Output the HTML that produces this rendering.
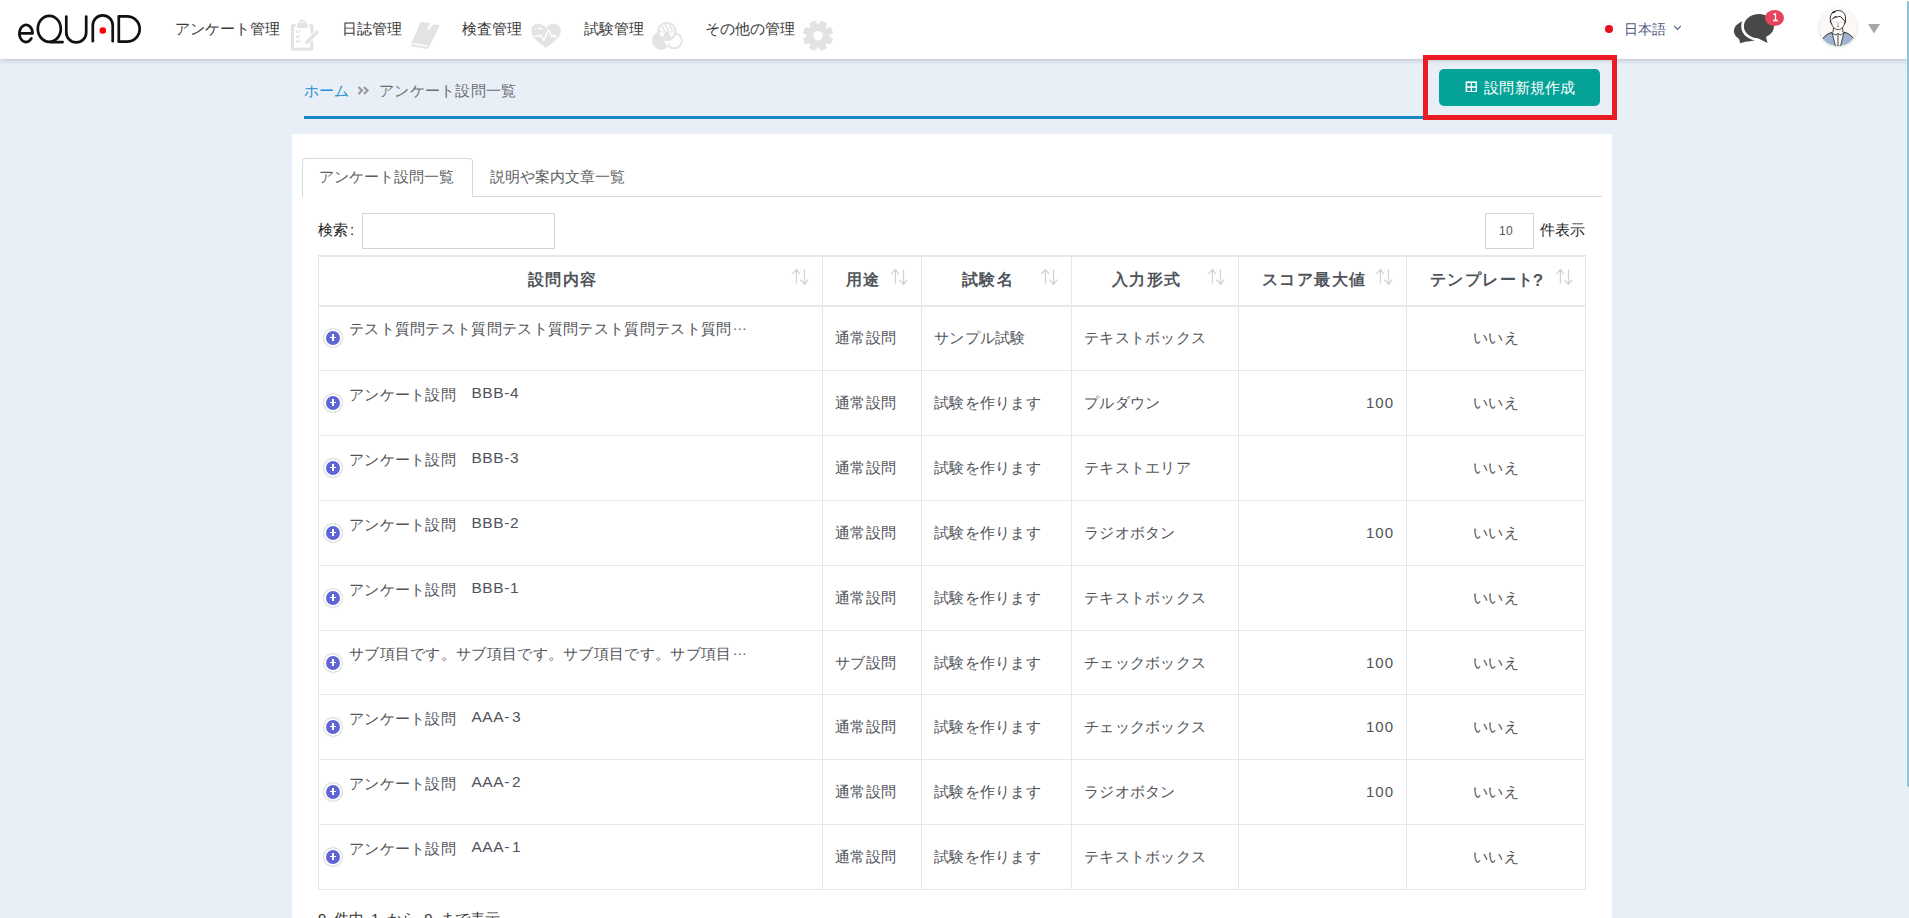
<!DOCTYPE html>
<html lang="ja"><head><meta charset="utf-8">
<style>
*{box-sizing:border-box;margin:0;padding:0}
html,body{width:1909px;height:918px;overflow:hidden}
body{background:#e8eff6;font-family:"Liberation Sans",sans-serif;position:relative;color:#555}
.a{position:absolute;white-space:nowrap}
#hdr{left:0;top:0;width:1909px;height:59px;background:#fff;box-shadow:0 1px 5px rgba(60,80,100,.28)}
.nav{font-size:15px;line-height:15px;color:#3a3a3a;top:21px}
.ico{fill:#e3e3e3}
#card{left:292px;top:134px;width:1320px;height:800px;background:#fff}
.th{font-size:15.5px;line-height:15px;font-weight:bold;color:#50555b;top:272px;letter-spacing:1.45px}
.td{font-size:14.5px;line-height:15px;color:#50545a;letter-spacing:.3px;margin-top:1px}
.vl{position:absolute;width:1px;background:#e4e8ec}
.hl{position:absolute;height:1px;background:#e4e8ec;left:318px;width:1268px}
.sort{position:absolute;top:269px;width:17px;height:17px}
.plus{position:absolute;width:18px;height:18px;border-radius:50%;background:#fff;box-shadow:0 0 2px rgba(0,0,0,.45)}
.plus:after{content:"";position:absolute;left:2px;top:2px;width:14px;height:14px;border-radius:50%;background:#5f66d4}
.plus i{position:absolute;z-index:2;background:#fff}
.lat{font-size:15.5px;letter-spacing:.6px;position:relative;top:-2px}
.sp{display:inline-block;width:2px}
.el{position:relative;top:-4px;letter-spacing:1px;margin-left:1px}
.num{font-size:15px;letter-spacing:1px;margin-top:0}
.q{font-size:17px;letter-spacing:0;margin-left:-2px;position:relative;top:1px}
</style></head><body>

<!-- header -->
<div class="a" id="hdr"></div>
<svg class="a" style="left:0;top:0" width="160" height="59" viewBox="0 0 160 59">
 <g fill="none" stroke="#111" stroke-width="2.7" stroke-linecap="round" stroke-linejoin="round">
  <path d="M19.4,33.4 H32.6 A6.6,8.55 0 1 0 31.4,38.4"/>
  <ellipse cx="49.3" cy="28.8" rx="11.5" ry="13"/>
  <path d="M50.5,42.1 H62.6"/>
  <path d="M66.3,16.6 V32.5 A9.95,9.95 0 0 0 86.2,32.5 V16.6"/>
  <path d="M92.8,41.2 V25.3 A9.95,9.95 0 0 1 112.7,25.3 V41.2"/>
  <path d="M118.8,16.3 H127 A12.7,12.7 0 0 1 127,41.7 H118.8 Z"/>
 </g>
 <circle cx="102.8" cy="30.5" r="3.3" fill="#f00"/>
</svg>

<div class="a nav" style="left:175px">アンケート管理</div>
<div class="a nav" style="left:342px">日誌管理</div>
<div class="a nav" style="left:462px">検査管理</div>
<div class="a nav" style="left:584px">試験管理</div>
<div class="a nav" style="left:705px">その他の管理</div>

<!-- nav icons -->
<svg class="a" style="left:285px;top:15px" width="40" height="40" viewBox="0 0 40 40">
 <g fill="none" stroke="#e3e3e3" stroke-width="3" stroke-linecap="round" stroke-linejoin="round">
  <path d="M9.5,10.5 H7.5 V34.3 H26.8 V27"/>
  <path d="M25.5,10.5 H27 V17"/>
  <path d="M11.5,16.5 l1.2,1.2 l2.2,-2" stroke-width="1.4"/>
  <path d="M11.5,21.3 l1.2,1.2 l2.2,-2" stroke-width="1.4"/>
  <path d="M11.5,26.1 l1.2,1.2 l2.2,-2" stroke-width="1.4"/>
  <path d="M22,27.3 L29.2,20.1" stroke-width="3.6"/>
  <path d="M31,18.3 L32,17.3" stroke-width="3.6"/>
 </g>
 <path class="ico" d="M12,9 Q12,8 13,8 H21.7 Q22.7,8 22.7,9 V12 Q22.7,13 21.7,13 H13 Q12,13 12,12 Z"/>
 <circle cx="17.2" cy="7.6" r="2.3" fill="none" stroke="#e3e3e3" stroke-width="1.8"/>
</svg>
<svg class="a" style="left:405px;top:15px" width="40" height="40" viewBox="0 0 40 40">
 <path class="ico" d="M15.5,7.5 Q16.2,7 17,7 L25.5,8 L21.8,14.8 L24.5,14.2 L27.8,10 L31.3,9.5 Q35,9.8 34.2,11.5 L23,34 L7.5,31.5 Q5.2,31 6.2,28.7 Z"/>
 <path d="M6.5,28.7 L22.5,31" stroke="#fff" stroke-width="1.3"/>
</svg>
<svg class="a" style="left:526px;top:15px" width="40" height="40" viewBox="0 0 40 40">
 <path class="ico" d="M20,32.7 C13,27.5 5.2,22.5 5.2,15.7 C5.2,11.5 8.3,8.7 12.3,8.7 C15.5,8.7 18.3,10.5 20,13 C21.7,10.5 24.5,8.7 27.7,8.7 C31.7,8.7 34.9,11.5 34.9,15.7 C34.9,22.5 27,27.5 20,32.7 Z"/>
 <path d="M8,21.3 H12.5 L14.8,20 L17.8,25.5 L22.5,14.5 L26,22 L28,20 L30.8,23" fill="none" stroke="#fff" stroke-width="1.5" stroke-linejoin="round"/>
 <path d="M8.2,13.5 H9.3 M11.7,13.5 H16.5" stroke="#fff" stroke-width="1.5"/>
</svg>
<svg class="a" style="left:646px;top:15px" width="40" height="40" viewBox="0 0 40 40">
 <defs><clipPath id="vt"><path d="M12,16.4 A8.8,8.8 0 0 1 29.6,16.4 Z"/></clipPath></defs>
 <circle cx="20.8" cy="16.5" r="8.8" fill="none" stroke="#e3e3e3" stroke-width="1.8"/>
 <g clip-path="url(#vt)" stroke="#e3e3e3" stroke-width="1.4"><path d="M10,9 L14.5,16.5 M13.5,7 L19,16.5 M17.5,6 L23,16.5 M21.5,6 L27,16.5 M25.5,6.5 L31,16"/></g>
 <path d="M11.8,16.5 A9,9 0 0 0 29.8,16.5 Z" fill="#e3e3e3"/>
 <circle cx="15.2" cy="25.5" r="9.2" fill="#e3e3e3"/>
 <circle cx="28.2" cy="25.7" r="7.7" fill="none" stroke="#e3e3e3" stroke-width="1.8"/>
 <path d="M13,17.4 H19.2 L16.1,22.7 Z M22.5,17.4 H28.8 L25.6,22.7 Z M17.9,25.9 H24.4 L21.2,31.4 Z" fill="#fff"/>
</svg>
<svg class="a" style="left:798px;top:15px" width="40" height="40" viewBox="0 0 40 40">
 <g transform="translate(20,20.7)">
  <path class="ico" d="M10.55,1.02 L14.25,3.16 L12.31,7.84 L8.18,6.74 L6.74,8.18 L7.84,12.31 L3.16,14.25 L1.02,10.55 L-1.02,10.55 L-3.16,14.25 L-7.84,12.31 L-6.74,8.18 L-8.18,6.74 L-12.31,7.84 L-14.25,3.16 L-10.55,1.02 L-10.55,-1.02 L-14.25,-3.16 L-12.31,-7.84 L-8.18,-6.74 L-6.74,-8.18 L-7.84,-12.31 L-3.16,-14.25 L-1.02,-10.55 L1.02,-10.55 L3.16,-14.25 L7.84,-12.31 L6.74,-8.18 L8.18,-6.74 L12.31,-7.84 L14.25,-3.16 L10.55,-1.02 Z" stroke="#e3e3e3" stroke-width="1.6" stroke-linejoin="round"/>
  <circle r="4.8" fill="#fff"/>
 </g>
</svg>

<!-- right header -->
<div class="a" style="left:1603.5px;top:24px;width:11px;height:9.5px;background:#fff;box-shadow:0 0 1px rgba(0,0,0,.22)"></div>
<div class="a" style="left:1605.1px;top:25.1px;width:7.6px;height:7.6px;border-radius:50%;background:#e8101c"></div>
<div class="a" style="left:1624px;top:22px;font-size:14px;line-height:14px;color:#4b5a80">日本語</div>
<svg class="a" style="left:1673px;top:25px" width="9" height="6" viewBox="0 0 9 6"><path d="M1.2,1 L4.5,4.4 L7.8,1" fill="none" stroke="#5a6688" stroke-width="1.1"/></svg>

<svg class="a" style="left:1728px;top:5px" width="62" height="45" viewBox="0 0 62 45">
 <ellipse cx="20.5" cy="26" rx="14.6" ry="10.4" fill="#484848"/>
 <path d="M10.5,32 L12.3,38.2 L22.8,35.3 L16,33 Z" fill="#484848"/>
 <g stroke="#fff" stroke-width="5.4" fill="#fff" stroke-linejoin="round"><ellipse cx="30.9" cy="21.2" rx="15" ry="12.1"/><path d="M29.4,32 L39.5,38 L37.7,31 Z"/></g>
 <ellipse cx="30.9" cy="21.2" rx="15" ry="12.1" fill="#484848"/>
 <path d="M28.4,32.5 L39.5,38 L37.7,31 Z" fill="#484848"/>
 <ellipse cx="46.5" cy="13" rx="9.5" ry="8.1" fill="#e8435c"/>
 <path d="M47.5,8.3 V15.4 M45.3,9.8 L47.5,8.3 M45.2,15.5 H49.9" fill="none" stroke="#fff" stroke-width="1.3"/>
</svg>

<div class="a" style="left:1819px;top:8px;width:38px;height:38px;border-radius:50%;background:#fbf8f6;box-shadow:0 1px 3px rgba(0,0,0,.16);overflow:hidden">
 <svg width="38" height="38" viewBox="0 0 38 38">
  <path d="M3.6,31.2 C5.5,27.8 9,25.3 13,24.5 L16.5,38 H21.5 L25,24.2 C29,25 32.5,27.5 34.2,30.2 L36,38 L2,38 Z" fill="#9fb2cf"/>
  <path d="M3.6,31.2 C5.5,27.8 9,25.3 13,24.5 M34.2,30.2 C32.5,27.5 29,25 25,24.2" fill="none" stroke="#1a1a1a" stroke-width=".9"/>
  <path d="M13,24.5 L16.5,38 H21.5 L25,24.2 L22,27.2 L19,25.5 L16,27.2 Z" fill="#fff" stroke="#1a1a1a" stroke-width=".8" stroke-linejoin="round"/>
  <path d="M19,25.5 V38" stroke="#777" stroke-width="1.4"/>
  <path d="M14.5,19.5 L14,24 M23.5,19.5 L24,24" stroke="#1a1a1a" stroke-width=".8"/>
  <path d="M12.3,12.5 C12.3,18 15,21.5 19,21.5 C23,21.5 25.8,18 25.8,12.5" fill="#fff" stroke="#1a1a1a" stroke-width=".8"/>
  <path d="M11.8,15 C10.5,9.5 11.5,4.5 16,3.2 C18.5,2 22.5,2.5 24.5,4.5 C26.5,6.5 27,10 26.2,14" fill="#fff" stroke="#1a1a1a" stroke-width=".9"/>
  <path d="M13,11.5 C14,9.5 16.5,8.5 18.5,9 C20,7.8 22,8.5 23,10 C24,11.5 25,12.5 26.2,13" fill="none" stroke="#1a1a1a" stroke-width=".9"/>
  <path d="M14.5,10.2 C15.5,9 17,8.6 18,8.8" fill="none" stroke="#555" stroke-width="1.3"/>
  <path d="M13.2,4.8 C14.5,4 15.5,3.8 16.5,3.6" fill="none" stroke="#1a1a1a" stroke-width="1.4"/>
  <path d="M14,14.2 H24" stroke="#e2c6c6" stroke-width=".8"/><path d="M18.4,16 H19.8 M18,18.3 H20.2" stroke="#333" stroke-width=".7"/><path d="M12.4,12.8 C11.3,13 11.3,15.5 12.8,16 M25.7,12.8 C26.8,13 26.8,15.5 25.3,16" fill="none" stroke="#1a1a1a" stroke-width=".8"/>
 </svg>
</div>
<svg class="a" style="left:1867px;top:23px" width="14" height="11" viewBox="0 0 14 11"><path d="M1,1 H13 L7,10.5 Z" fill="#a8a8a8"/></svg>

<!-- scrollbar thumb -->
<div class="a" style="left:1907px;top:1px;width:2px;height:786px;border-radius:1px;background:#93c1da"></div>

<!-- breadcrumb -->
<div class="a" style="left:304px;top:83px;font-size:15px;line-height:15px;color:#2b8fd0">ホーム</div>
<svg class="a" style="left:357px;top:86px" width="13" height="9" viewBox="0 0 13 9"><path d="M1.5,1 L5,4.5 L1.5,8 M7,1 L10.5,4.5 L7,8" fill="none" stroke="#999" stroke-width="2.2"/></svg>
<div class="a" style="left:379px;top:83px;font-size:15px;line-height:15px;color:#6a6e73;letter-spacing:.3px">アンケート設問一覧</div>
<div class="a" style="left:304px;top:116px;width:1300px;height:3px;background:#1a85c9"></div>

<!-- button + red box -->
<div class="a" style="left:1439px;top:69px;width:161px;height:37px;border-radius:5px;background:#05a297"></div>
<svg class="a" style="left:1465px;top:81px" width="12" height="11" viewBox="0 0 12 11"><rect x="1.4" y="1.2" width="10" height="9.6" fill="none" stroke="#fff" stroke-width="1.6"/><path d="M6.4,1.5 V10.5 M1.5,6 H11.3" stroke="#fff" stroke-width="1.3"/></svg>
<div class="a" style="left:1484px;top:80.5px;font-size:14.5px;line-height:15px;color:#fff;letter-spacing:.25px">設問新規作成</div>
<div class="a" style="left:1423px;top:55px;width:194px;height:65px;border:5px solid #ec1c24"></div>

<!-- card -->
<div class="a" id="card"></div>
<!-- tabs -->
<div class="a" style="left:302px;top:196px;width:1300px;height:1px;background:#d5dae1"></div>
<div class="a" style="left:302px;top:158px;width:171px;height:39px;border:1px solid #d5dae1;border-bottom:0;border-radius:4px 4px 0 0;background:#fff"></div>
<div class="a" style="left:319px;top:169px;font-size:15px;line-height:15px;color:#5b5f64">アンケート設問一覧</div>
<div class="a" style="left:490px;top:169px;font-size:15px;line-height:15px;color:#5b5f64">説明や案内文章一覧</div>

<!-- search -->
<div class="a" style="left:318px;top:222px;font-size:15px;line-height:15px;color:#222">検索<span style="margin-left:2px">:</span></div>
<div class="a" style="left:362px;top:213px;width:193px;height:36px;border:1px solid #cfd4da"></div>
<div class="a" style="left:1485px;top:213px;width:49px;height:36px;border:1px solid #cfd4da"></div>
<div class="a" style="left:1499px;top:225px;font-size:12px;line-height:12px;color:#555;letter-spacing:.4px">10</div>
<div class="a" style="left:1540px;top:222px;font-size:15px;line-height:15px;color:#222">件表示</div>

<!-- table -->
<!-- TABLE START -->
<!-- table lines -->
<div class="a" style="left:318px;top:255px;width:1268px;height:2px;background:#e4e8ec"></div>
<div class="a" style="left:318px;top:305px;width:1268px;height:2px;background:#e4e8ec"></div>
<div class="hl" style="top:370px"></div>
<div class="hl" style="top:435px"></div>
<div class="hl" style="top:500px"></div>
<div class="hl" style="top:565px"></div>
<div class="hl" style="top:630px"></div>
<div class="hl" style="top:694px"></div>
<div class="hl" style="top:759px"></div>
<div class="hl" style="top:824px"></div>
<div class="hl" style="top:889px"></div>
<div class="vl" style="left:318px;top:255px;height:635px"></div>
<div class="vl" style="left:822px;top:255px;height:635px"></div>
<div class="vl" style="left:921px;top:255px;height:635px"></div>
<div class="vl" style="left:1071px;top:255px;height:635px"></div>
<div class="vl" style="left:1238px;top:255px;height:635px"></div>
<div class="vl" style="left:1406px;top:255px;height:635px"></div>
<div class="vl" style="left:1585px;top:255px;height:635px"></div>
<div class="a th" style="left:528px">設問内容</div>
<div class="a th" style="left:846px">用途</div>
<div class="a th" style="left:962px">試験名</div>
<div class="a th" style="left:1112px">入力形式</div>
<div class="a th" style="left:1262px">スコア最大値</div>
<div class="a th" style="left:1430px">テンプレート<span class=q>?</span></div>
<svg class="a" style="left:786px;top:262px" width="30" height="30" viewBox="0 0 30 30"><path d="M10.4,7.5 V21.6 M6.2,12.1 L10.4,7.5 L14,12.1 M18.5,7.4 V22.5 M14.4,17.6 L18.5,22.5 L22.2,17.6" fill="none" stroke="#d0d3d8" stroke-width="1.3"/></svg>
<svg class="a" style="left:885px;top:262px" width="30" height="30" viewBox="0 0 30 30"><path d="M10.4,7.5 V21.6 M6.2,12.1 L10.4,7.5 L14,12.1 M18.5,7.4 V22.5 M14.4,17.6 L18.5,22.5 L22.2,17.6" fill="none" stroke="#d0d3d8" stroke-width="1.3"/></svg>
<svg class="a" style="left:1035px;top:262px" width="30" height="30" viewBox="0 0 30 30"><path d="M10.4,7.5 V21.6 M6.2,12.1 L10.4,7.5 L14,12.1 M18.5,7.4 V22.5 M14.4,17.6 L18.5,22.5 L22.2,17.6" fill="none" stroke="#d0d3d8" stroke-width="1.3"/></svg>
<svg class="a" style="left:1202px;top:262px" width="30" height="30" viewBox="0 0 30 30"><path d="M10.4,7.5 V21.6 M6.2,12.1 L10.4,7.5 L14,12.1 M18.5,7.4 V22.5 M14.4,17.6 L18.5,22.5 L22.2,17.6" fill="none" stroke="#d0d3d8" stroke-width="1.3"/></svg>
<svg class="a" style="left:1370px;top:262px" width="30" height="30" viewBox="0 0 30 30"><path d="M10.4,7.5 V21.6 M6.2,12.1 L10.4,7.5 L14,12.1 M18.5,7.4 V22.5 M14.4,17.6 L18.5,22.5 L22.2,17.6" fill="none" stroke="#d0d3d8" stroke-width="1.3"/></svg>
<svg class="a" style="left:1550px;top:262px" width="30" height="30" viewBox="0 0 30 30"><path d="M10.4,7.5 V21.6 M6.2,12.1 L10.4,7.5 L14,12.1 M18.5,7.4 V22.5 M14.4,17.6 L18.5,22.5 L22.2,17.6" fill="none" stroke="#d0d3d8" stroke-width="1.3"/></svg>
<div class="plus" style="left:324px;top:328.7px"><i style="left:5.6px;top:8.4px;width:6.8px;height:1.2px"></i><i style="left:8.4px;top:5.6px;width:1.2px;height:6.8px"></i></div>
<div class="a td" style="left:349px;top:321.3px">テスト質問テスト質問テスト質問テスト質問テスト質問<span class=el>…</span></div>
<div class="a td" style="left:835px;top:330.0px">通常設問</div>
<div class="a td" style="left:934px;top:330.0px">サンプル試験</div>
<div class="a td" style="left:1084px;top:330.0px">テキストボックス</div>
<div class="a td" style="left:1473px;top:330.0px">いいえ</div>
<div class="plus" style="left:324px;top:393.7px"><i style="left:5.6px;top:8.4px;width:6.8px;height:1.2px"></i><i style="left:8.4px;top:5.6px;width:1.2px;height:6.8px"></i></div>
<div class="a td" style="left:349px;top:386.3px">アンケート設問　<span class=lat>BBB-4</span></div>
<div class="a td" style="left:835px;top:395.0px">通常設問</div>
<div class="a td" style="left:934px;top:395.0px">試験を作ります</div>
<div class="a td" style="left:1084px;top:395.0px">プルダウン</div>
<div class="a td num" style="right:515px;top:395.0px">100</div>
<div class="a td" style="left:1473px;top:395.0px">いいえ</div>
<div class="plus" style="left:324px;top:458.7px"><i style="left:5.6px;top:8.4px;width:6.8px;height:1.2px"></i><i style="left:8.4px;top:5.6px;width:1.2px;height:6.8px"></i></div>
<div class="a td" style="left:349px;top:451.3px">アンケート設問　<span class=lat>BBB-3</span></div>
<div class="a td" style="left:835px;top:460.0px">通常設問</div>
<div class="a td" style="left:934px;top:460.0px">試験を作ります</div>
<div class="a td" style="left:1084px;top:460.0px">テキストエリア</div>
<div class="a td" style="left:1473px;top:460.0px">いいえ</div>
<div class="plus" style="left:324px;top:523.7px"><i style="left:5.6px;top:8.4px;width:6.8px;height:1.2px"></i><i style="left:8.4px;top:5.6px;width:1.2px;height:6.8px"></i></div>
<div class="a td" style="left:349px;top:516.3px">アンケート設問　<span class=lat>BBB-2</span></div>
<div class="a td" style="left:835px;top:525.0px">通常設問</div>
<div class="a td" style="left:934px;top:525.0px">試験を作ります</div>
<div class="a td" style="left:1084px;top:525.0px">ラジオボタン</div>
<div class="a td num" style="right:515px;top:525.0px">100</div>
<div class="a td" style="left:1473px;top:525.0px">いいえ</div>
<div class="plus" style="left:324px;top:588.7px"><i style="left:5.6px;top:8.4px;width:6.8px;height:1.2px"></i><i style="left:8.4px;top:5.6px;width:1.2px;height:6.8px"></i></div>
<div class="a td" style="left:349px;top:581.3px">アンケート設問　<span class=lat>BBB-1</span></div>
<div class="a td" style="left:835px;top:590.0px">通常設問</div>
<div class="a td" style="left:934px;top:590.0px">試験を作ります</div>
<div class="a td" style="left:1084px;top:590.0px">テキストボックス</div>
<div class="a td" style="left:1473px;top:590.0px">いいえ</div>
<div class="plus" style="left:324px;top:653.7px"><i style="left:5.6px;top:8.4px;width:6.8px;height:1.2px"></i><i style="left:8.4px;top:5.6px;width:1.2px;height:6.8px"></i></div>
<div class="a td" style="left:349px;top:646.3px">サブ項目です。サブ項目です。サブ項目です。サブ項目<span class=el>…</span></div>
<div class="a td" style="left:835px;top:654.5px">サブ設問</div>
<div class="a td" style="left:934px;top:654.5px">試験を作ります</div>
<div class="a td" style="left:1084px;top:654.5px">チェックボックス</div>
<div class="a td num" style="right:515px;top:654.5px">100</div>
<div class="a td" style="left:1473px;top:654.5px">いいえ</div>
<div class="plus" style="left:324px;top:717.7px"><i style="left:5.6px;top:8.4px;width:6.8px;height:1.2px"></i><i style="left:8.4px;top:5.6px;width:1.2px;height:6.8px"></i></div>
<div class="a td" style="left:349px;top:710.3px">アンケート設問　<span class=lat>AAA-<i class=sp></i>3</span></div>
<div class="a td" style="left:835px;top:719.0px">通常設問</div>
<div class="a td" style="left:934px;top:719.0px">試験を作ります</div>
<div class="a td" style="left:1084px;top:719.0px">チェックボックス</div>
<div class="a td num" style="right:515px;top:719.0px">100</div>
<div class="a td" style="left:1473px;top:719.0px">いいえ</div>
<div class="plus" style="left:324px;top:782.7px"><i style="left:5.6px;top:8.4px;width:6.8px;height:1.2px"></i><i style="left:8.4px;top:5.6px;width:1.2px;height:6.8px"></i></div>
<div class="a td" style="left:349px;top:775.3px">アンケート設問　<span class=lat>AAA-<i class=sp></i>2</span></div>
<div class="a td" style="left:835px;top:784.0px">通常設問</div>
<div class="a td" style="left:934px;top:784.0px">試験を作ります</div>
<div class="a td" style="left:1084px;top:784.0px">ラジオボタン</div>
<div class="a td num" style="right:515px;top:784.0px">100</div>
<div class="a td" style="left:1473px;top:784.0px">いいえ</div>
<div class="plus" style="left:324px;top:847.7px"><i style="left:5.6px;top:8.4px;width:6.8px;height:1.2px"></i><i style="left:8.4px;top:5.6px;width:1.2px;height:6.8px"></i></div>
<div class="a td" style="left:349px;top:840.3px">アンケート設問　<span class=lat>AAA-<i class=sp></i>1</span></div>
<div class="a td" style="left:835px;top:849.0px">通常設問</div>
<div class="a td" style="left:934px;top:849.0px">試験を作ります</div>
<div class="a td" style="left:1084px;top:849.0px">テキストボックス</div>
<div class="a td" style="left:1473px;top:849.0px">いいえ</div>
<!-- TABLE END -->

<div class="a" style="left:318px;top:910.5px;font-size:15px;line-height:15px;color:#333;word-spacing:3.2px">9 件中 1 から 9 まで表示</div>

</body></html>
